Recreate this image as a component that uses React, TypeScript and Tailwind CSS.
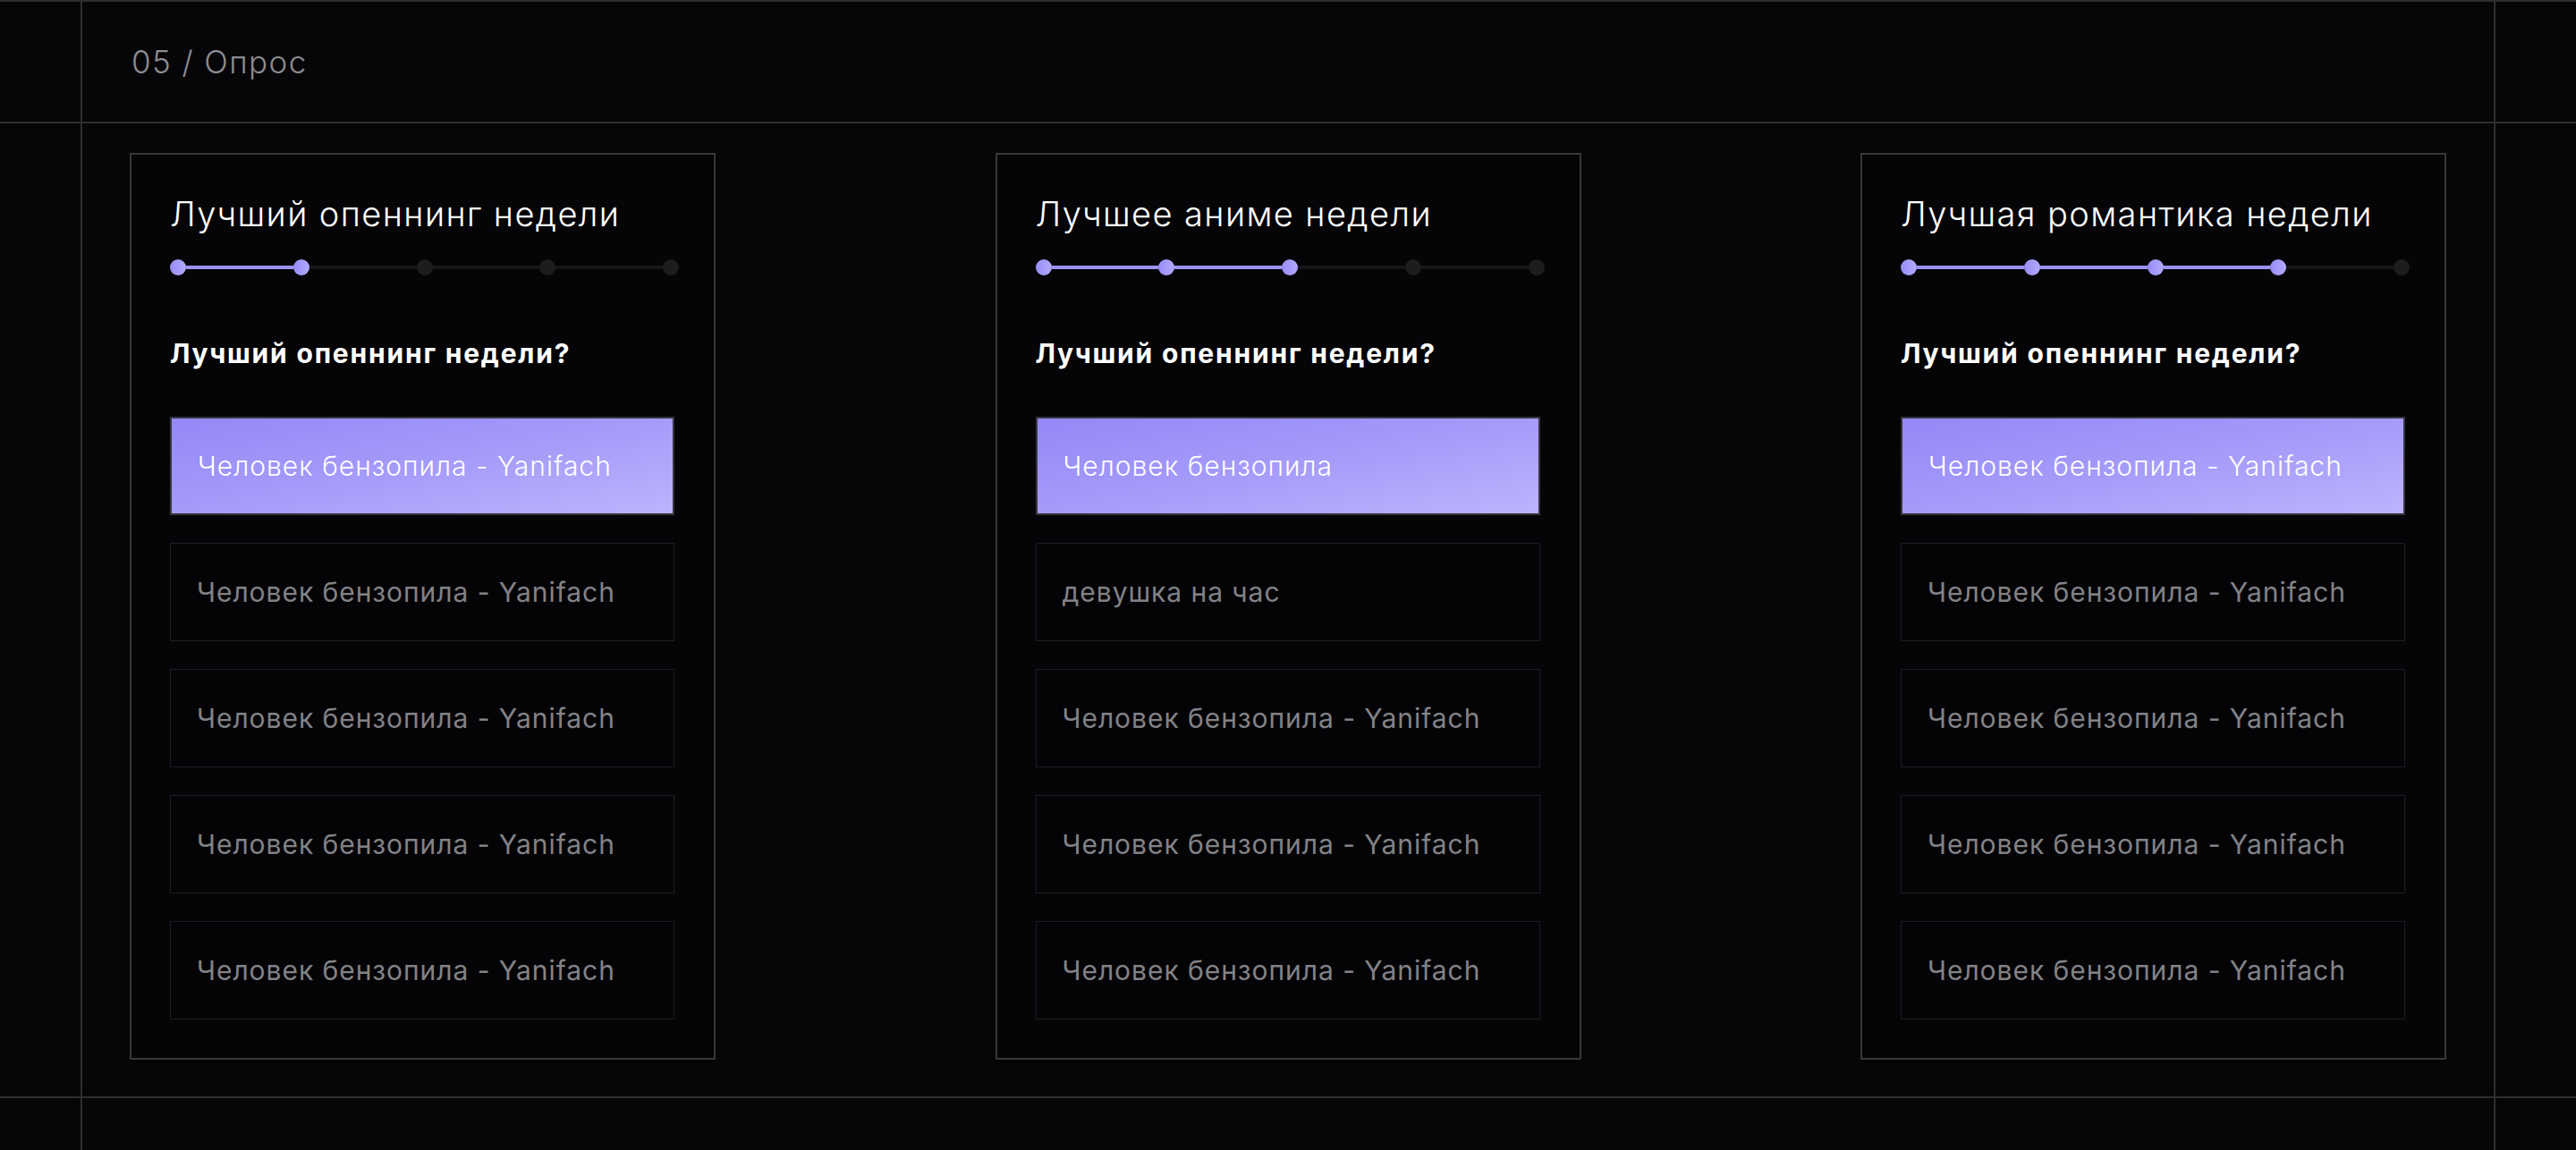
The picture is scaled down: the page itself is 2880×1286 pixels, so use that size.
import React from "react";

type Poll = {
  title: string;
  step: number;
  question: string;
  options: string[];
};

const polls: Poll[] = [
  {
    title: "Лучший опеннинг недели",
    step: 2,
    question: "Лучший опеннинг недели?",
    options: [
      "Человек бензопила - Yanifach",
      "Человек бензопила - Yanifach",
      "Человек бензопила - Yanifach",
      "Человек бензопила - Yanifach",
      "Человек бензопила - Yanifach",
    ],
  },
  {
    title: "Лучшее аниме недели",
    step: 3,
    question: "Лучший опеннинг недели?",
    options: [
      "Человек бензопила",
      "девушка на час",
      "Человек бензопила - Yanifach",
      "Человек бензопила - Yanifach",
      "Человек бензопила - Yanifach",
    ],
  },
  {
    title: "Лучшая романтика недели",
    step: 4,
    question: "Лучший опеннинг недели?",
    options: [
      "Человек бензопила - Yanifach",
      "Человек бензопила - Yanifach",
      "Человек бензопила - Yanifach",
      "Человек бензопила - Yanifach",
      "Человек бензопила - Yanifach",
    ],
  },
];

function Progress({ step }: { step: number }) {
  const dots = [1, 2, 3, 4, 5];
  return (
    <div className="flex items-center w-[569px] mt-[28px]">
      {dots.map((d, i) => (
        <React.Fragment key={d}>
          {i > 0 && (
            <div
              className={
                d <= step
                  ? "flex-1 h-[4px] bg-[#9c92f6]"
                  : "flex-1 h-[4px] bg-[#161618]"
              }
            />
          )}
          <div
            className={
              d <= step
                ? "w-[18px] h-[18px] rounded-full bg-gradient-to-r from-[#978cf7] to-[#b3abfc]"
                : "w-[18px] h-[18px] rounded-full bg-[#1d1d1f]"
            }
          />
        </React.Fragment>
      ))}
    </div>
  );
}

function PollCard({ poll }: { poll: Poll }) {
  return (
    <div className="w-[655px] border-2 border-[#38383b] bg-[#050507] p-[43px] flex flex-col">
      <h2 className="text-[38px] leading-[46px] font-light text-white tracking-[1.4px]">
        {poll.title}
      </h2>
      <Progress step={poll.step} />
      <p className="mt-[69px] text-[30px] leading-[36px] font-bold text-white tracking-[1.8px]">
        {poll.question}
      </p>
      <div className="mt-[53px] flex flex-col gap-[31px]">
        {poll.options.map((opt, i) =>
          i === 0 ? (
            <div
              key={i}
              className="w-[564px] h-[110px] flex items-center pl-[29px] border-2 border-[#36363f] bg-gradient-to-br from-[#9488f7] via-[#a59bf9] to-[#bcb4fe] text-[30px] font-light tracking-[1px] text-white"
            >
              {opt}
            </div>
          ) : (
            <div
              key={i}
              className="w-[564px] h-[110px] flex items-center pl-[29px] border border-[#1e1e22] bg-[#040406] text-[30px] font-normal tracking-[0.95px] text-[#828286]"
            >
              {opt}
            </div>
          )
        )}
      </div>
    </div>
  );
}

function Row({
  height,
  children,
}: {
  height: string;
  children?: React.ReactNode;
}) {
  return (
    <div className={`flex border-b-2 border-[#2e2e31] ${height}`}>
      <div className="w-[92px] shrink-0 border-r-2 border-[#2e2e31]" />
      <div className="flex-1 min-w-0">{children}</div>
      <div className="w-[92px] shrink-0 border-l-2 border-[#2e2e31]" />
    </div>
  );
}

export default function App() {
  return (
    <div
      className="w-[2880px] h-[1286px] bg-[#060609] border-t-2 border-[#2e2e31] overflow-hidden"
      style={{ fontFamily: "Inter, 'Noto Sans', sans-serif" }}
    >
      <Row height="h-[136px]">
        <div className="h-full flex items-center pl-[55px]">
          <span className="text-[35px] font-light tracking-[1.4px] text-[#8c8c90]">05 / Опрос</span>
        </div>
      </Row>
      <Row height="h-[1090px]">
        <div className="h-full flex justify-between pl-[53px] pr-[53px] pt-[33px]">
          {polls.map((p, i) => (
            <div key={i} className="h-[1015px]">
              <PollCard poll={p} />
            </div>
          ))}
        </div>
      </Row>
      <Row height="h-[60px]" />
    </div>
  );
}
